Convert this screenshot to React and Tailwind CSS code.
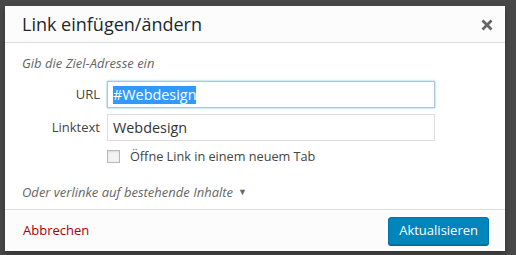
import React from "react";

export default function App() {
  return (
    <div className="w-[516px] h-[255px] bg-[#484848] overflow-hidden pl-[5px] pt-[6px]" style={{ fontFamily: '"Open Sans", sans-serif' }}>
      <div className="w-[500px] h-[245px] bg-white flex flex-col shadow-[0_3px_6px_rgba(0,0,0,0.3)]">
        <div className="h-[37px] bg-[#fcfcfc] border-b border-[#dddddd] flex items-center justify-between pl-[17px] pr-[12px] shrink-0">
          <span className="text-[18px] leading-none text-[#23282d]">Link einfügen/ändern</span>
          <svg width="12" height="12" viewBox="0 0 12 12" className="mt-[1px]">
            <path d="M1.5 1.5 L10.5 10.5 M10.5 1.5 L1.5 10.5" stroke="#666" strokeWidth="2.8" strokeLinecap="butt" />
          </svg>
        </div>
        <div className="flex-1 flex flex-col pl-[17px] pr-[70px]">
          <div className="mt-[11px] text-[13px] italic text-[#666] leading-[18px]">Gib die Ziel-Adresse ein</div>
          <div className="mt-[9px] flex items-center">
            <span className="w-[85px] text-right pr-[7px] text-[13px] text-[#444]">URL</span>
            <div className="w-[328px] h-[27px] border border-[#a9c8d8] shadow-[0_0_2px_rgba(30,140,190,0.6)] flex items-center pl-[5px] text-[14.4px] text-[#333]">
              <span className="bg-[#3399ff] text-white leading-[18px]">#Webdesign</span>
            </div>
          </div>
          <div className="mt-[6px] flex items-center">
            <span className="w-[85px] text-right pr-[7px] text-[13px] text-[#444]">Linktext</span>
            <div className="w-[328px] h-[27px] border border-[#dddddd] flex items-center pl-[5px] text-[14.4px] text-[#333]">
              Webdesign
            </div>
          </div>
          <div className="mt-[7px] h-[16px] flex items-center pl-[85px]">
            <span className="w-[13px] h-[13px] border border-[#b4b9be] bg-[#f3f3f3] shadow-[inset_0_1px_2px_rgba(0,0,0,0.1)]"></span>
            <span className="ml-[10px] text-[12.7px] text-[#444] leading-[16px]">Öffne Link in einem neuem Tab</span>
          </div>
          <div className="mt-[19px] flex items-center text-[13px] italic text-[#666] leading-[18px]">
            Oder verlinke auf bestehende Inhalte
            <span className="ml-[5px] not-italic text-[9px] text-[#666]">▼</span>
          </div>
        </div>
        <div className="h-[42px] bg-[#fcfcfc] border-t border-[#dddddd] flex items-center justify-between pl-[18px] pr-[16px] shrink-0">
          <span className="text-[13px] text-[#a00] mt-[1px]">Abbrechen</span>
          <div className="h-[28px] px-[10px] rounded-[3px] bg-[#0085ba] border border-[#0073aa] shadow-[0_1px_0_#006799] flex items-center text-[13px] text-white">Aktualisieren</div>
        </div>
      </div>
    </div>
  );
}
